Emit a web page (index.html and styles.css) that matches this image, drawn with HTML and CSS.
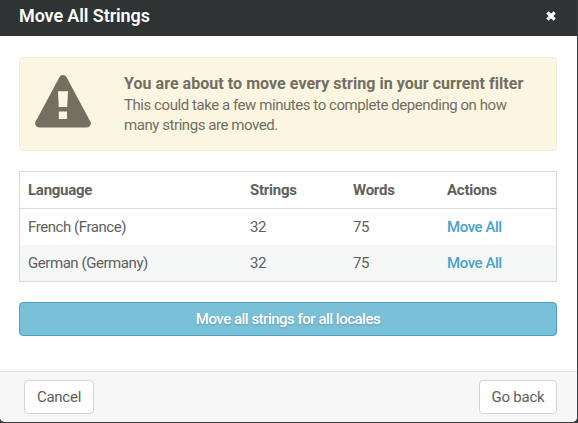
FILE: index.html
```
<!DOCTYPE html>
<html lang="en">
<head>
<meta charset="utf-8">
<title>Move All Strings</title>
<link rel="stylesheet" href="styles.css">
</head>
<body>
<div class="modal">
  <header class="modal-header">
    <h1 class="title">Move All Strings</h1>
    <button class="close" aria-label="Close">
      <svg width="10" height="10" viewBox="0 0 10 10"><path d="M2.5 2.5 7.5 7.5M7.5 2.5 2.5 7.5" stroke="#fff" stroke-width="3.2" stroke-linecap="square"/></svg>
    </button>
  </header>
  <main class="modal-body">
    <section class="alert">
      <svg class="warning" width="56" height="53" viewBox="0 0 56 53"><path fill="#736f61" fill-rule="evenodd" d="M24.4 2.2Q25.6 0 28 0T31.6 2.2L55.3 46.4Q56.5 48.6 55.3 50.5T51.8 52.5H4.2Q1.9 52.5 .7 50.5T.7 46.4ZM23 16.2 23.7 32H32.2L33 16.2ZM23.8 36.5V44H32V36.5Z"/></svg>
      <div>
        <div class="alert-title">You are about to move every string in your current filter</div>
        <p class="alert-text">This could take a few minutes to complete depending on how<br>many strings are moved.</p>
      </div>
    </section>
    <table class="locales">
      <thead><tr><th class="c-lang">Language</th><th class="c-strings">Strings</th><th class="c-words">Words</th><th>Actions</th></tr></thead>
      <tbody>
        <tr><td>French (France)</td><td>32</td><td>75</td><td><a>Move All</a></td></tr>
        <tr><td>German (Germany)</td><td>32</td><td>75</td><td><a>Move All</a></td></tr>
      </tbody>
    </table>
    <button class="btn primary">Move all strings for all locales</button>
  </main>
  <footer class="modal-footer">
    <button class="btn cancel">Cancel</button>
    <button class="btn back">Go back</button>
  </footer>
</div>
</body>
</html>
```
FILE: styles.css
```
* { box-sizing: border-box; }
body { margin: 0; background: #3b3d3e; overflow: hidden; font: 15px/20px Roboto, "Liberation Sans", sans-serif; letter-spacing: -.44px; color: #5f6060; }
.modal { width: 577px; height: 422px; display: flex; flex-direction: column; background: #fff; border-radius: 0 0 5px 5px; overflow: hidden; }
.modal-header { height: 36px; flex: none; padding: 0 21px 4px 19px; display: flex; justify-content: space-between; align-items: center; background: #2e3333; color: #fff; }
.title { margin: 0; font-size: 18px; line-height: 24px; font-weight: 600; letter-spacing: -.1px; }
.close { display: flex; padding: 0; border: 0; background: none; }
.modal-body { flex: 1; padding: 21px 20px 0 19px; }
.alert { height: 94px; display: flex; gap: 33px; padding: 16px 15px; border: 1px solid #faebcc; border-radius: 4px; background: #fcf5e2; color: #736f61; }
.warning { margin-top: 1px; flex: none; }
.alert-title { font-size: 16px; font-weight: 700; line-height: 20px; letter-spacing: .045px; white-space: nowrap; }
.alert-text { margin: 1px 0 0; white-space: nowrap; }
.locales { width: 100%; margin-top: 20px; border-collapse: separate; border-spacing: 0; border: 1px solid #d9dcdc; table-layout: fixed; }
th, td { height: 36px; padding: 0 8px; text-align: left; }
th { height: 37px; border-bottom: 1px solid #d9dcdc; font-weight: 700; letter-spacing: -.25px; }
.c-lang { width: 222px; }
.c-strings { width: 103px; }
.c-words { width: 94px; }
tbody tr:last-child { background: #f5f7f7; }
a { color: #4aa3c7; font-weight: 500; }
.btn { height: 34px; padding: 0; border: 1px solid #d4d4d4; border-radius: 4px; background: #fff; color: #5b5e5e; font: inherit; letter-spacing: -.25px; }
.primary { display: block; width: 100%; margin-top: 20px; background: #79c0d9; border-color: #519fbd; color: #fff; font-weight: 500; letter-spacing: -.5px; text-shadow: 0 1px 2px rgba(0,0,0,.2); }
.modal-footer { height: 51px; flex: none; padding: 8px 20px 0 24px; display: flex; justify-content: space-between; border-top: 1px solid #e2e2e2; background: #f7f7f7; }
.cancel { width: 70px; }
.back { width: 78px; }
```
